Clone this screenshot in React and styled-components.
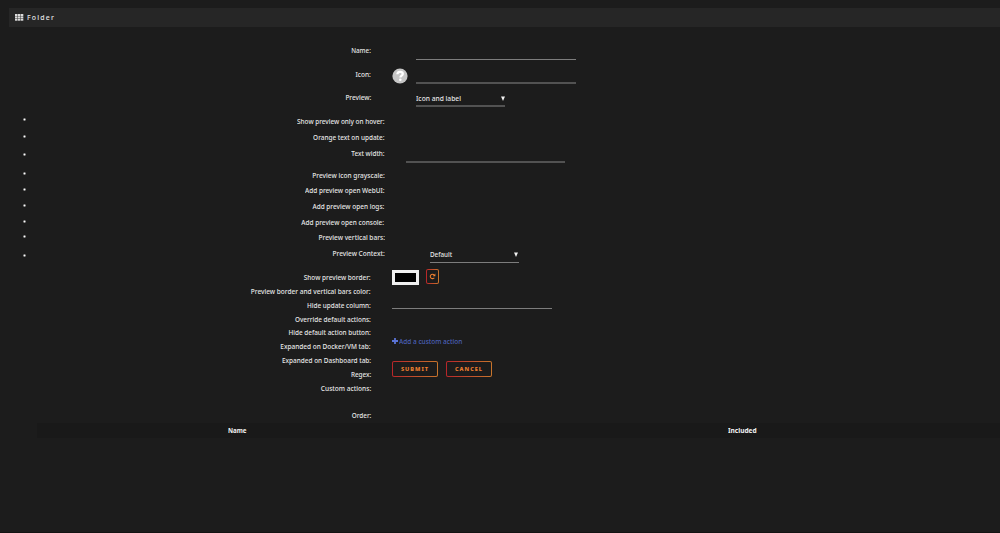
import React from "react"

import styled, { createGlobalStyle } from "styled-components"

const GlobalStyle = createGlobalStyle`
  * { box-sizing: border-box; }
  body {
    margin: 0;
    overflow: hidden;
    background: #1c1c1c;
    color: #e6e6e6;
    font-family: "Noto Sans", sans-serif;
    font-size: 7.6px;
    font-weight: 500;
    line-height: 13px;
  }
`

const Page = styled.div`
  height: 533px;
  overflow: hidden;
  border-bottom: 1px solid #131313;
`

const TitleBar = styled.header`
  display: flex;
  align-items: center;
  height: 19px;
  margin: 8px 0 0 9px;
  padding: 0 0 1px 5.5px;
  gap: 3.5px;
  background: #262626;
  letter-spacing: 1.3px;
`

const Form = styled.form`
  padding-top: 17px;
`

const Row = styled.div`
  display: flex;
  align-items: flex-start;
  height: ${props => props.$height}px;
`

// narrows the text to the proportions of a condensed face
const Condensed = styled.span`
  display: inline-block;
  white-space: nowrap;
  transform: scaleX(${props => props.$scale || 0.85});
  transform-origin: ${props => props.$origin || "left"} center;
`

const Label = styled.label`
  flex: none;
  width: 371px;
  height: 14px;
  padding-top: ${props => props.$drop || 0}px;
  text-align: right;
`

const ListLabel = styled(Label)`
  width: 361px;
`

const Marker = styled.span`
  flex: none;
  width: 3px;
  height: 3px;
  margin: ${props => props.$drop}px -2px 0 22.5px;
  background: radial-gradient(circle, #fff 15%, #1c1c1c 80%);
`

const Input = styled.input`
  display: block;
  width: 159.5px;
  height: ${props => props.$height || 16}px;
  margin-left: ${props => props.$left || 0}px;
  padding: 0;
  border: 0;
  border-bottom: ${props => props.$thick ? "2px solid #525252" : "1px solid #7d7d7d"};
  outline: none;
  background: transparent;
  color: inherit;
`

const Select = styled.div`
  display: flex;
  justify-content: space-between;
  width: 89px;
  height: ${props => props.$height}px;
  margin-left: ${props => props.$left}px;
  padding-top: 1px;
  border-bottom: ${props => props.$thick ? "2px solid #525252" : "1px solid #7d7d7d"};
`

const Caret = styled.svg`
  width: 4px;
  height: 5px;
  margin: 4px 0.5px 0 0;
  fill: #f2f2f2;
`

const Question = styled.svg`
  flex: none;
  width: 16px;
  height: 16px;
  margin: 1px 0 0 21px;
`

const Lower = styled.div`
  display: flex;
`

const Controls = styled.div`
  display: flex;
  flex-direction: column;
  align-items: flex-start;
  margin-left: 21px;
`

const ColorRow = styled.div`
  display: flex;
  gap: 7px;
  height: 16px;
  margin-top: -2px;
`

const Swatch = styled.div`
  width: 27px;
  height: 15px;
  margin-top: 1px;
  border: 3px solid #efefef;
  background: #000;
`

const OutlineButton = styled.button`
  display: flex;
  align-items: center;
  justify-content: center;
  width: ${props => props.$width}px;
  height: ${props => props.$height}px;
  padding: 0;
  border: 1px solid transparent;
  border-radius: 2px;
  background:
    linear-gradient(#1c1c1c, #1c1c1c) padding-box,
    linear-gradient(90deg, #b8262a, #c8752c) border-box;
  color: #f08030;
  font-family: inherit;
  font-size: 5.6px;
  font-weight: 800;
  letter-spacing: 1px;
`

const AddAction = styled.a`
  display: flex;
  align-items: center;
  gap: 1px;
  height: 14px;
  margin-top: 25px;
  color: #4b60b8;
`

const Buttons = styled.div`
  display: flex;
  gap: 8px;
  margin-top: 13px;
`

const OrderTable = styled.div`
  display: grid;
  grid-template-columns: 400px 1fr;
  margin-left: 37px;
  height: 15px;
  background: #191919;
  color: #f2f2f2;
  font-weight: 700;
  line-height: 14px;
`

const HeadCell = styled.div`
  padding-left: ${props => props.$inset}px;
`

const previewItems = [
  { text: "Show preview only on hover:", height: 17, drop: 4, scale: 0.845, nudge: 1 },
  { text: "Orange text on update:", height: 16, drop: 4, scale: 0.845 },
  { text: "Text width:", height: 21, drop: 6, scale: 0.84, input: true },
  { text: "Preview icon grayscale:", height: 16, drop: 4, scale: 0.865, nudge: 1 },
  { text: "Add preview open WebUI:", height: 16, drop: 4, scale: 0.85 },
  { text: "Add preview open logs:", height: 16, drop: 4, scale: 0.853 },
  { text: "Add preview open console:", height: 15, drop: 4, scale: 0.853 },
  { text: "Preview vertical bars:", height: 16, drop: 4, scale: 0.863 },
  { text: "Preview Context:", height: 24, drop: 7, scale: 0.858, select: true },
]

const lowerItems = [
  { text: "Show preview border:", height: 14, scale: 0.851 },
  { text: "Preview border and vertical bars color:", height: 14, scale: 0.858 },
  { text: "Hide update column:", height: 14, scale: 0.843 },
  { text: "Override default actions:", height: 13, scale: 0.845 },
  { text: "Hide default action button:", height: 14, scale: 0.842 },
  { text: "Expanded on Docker/VM tab:", height: 14, scale: 0.855 },
  { text: "Expanded on Dashboard tab:", height: 14, scale: 0.848 },
  { text: "Regex:", height: 14, scale: 0.84 },
  { text: "Custom actions:", height: 27, scale: 0.865 },
  { text: "Order:", height: 14, scale: 0.84 },
]

const GridIcon = () => (
  <svg width="9" height="7" viewBox="0 0 9 7" fill="#dcdcdc">
    {[0, 2.9, 5.8].map(x => [0, 2.35, 4.7].map(y => (
      <rect key={`${x}-${y}`} x={x} y={y} width="2.5" height="2" />
    )))}
  </svg>
)

const QuestionIcon = () => (
  <Question viewBox="0 0 16 16">
    <circle cx="8" cy="8" r="7.6" fill="#c6c6c6" />
    <path d="M5.4 6.2C5.5 4.6 6.6 3.9 8.1 3.9s2.7.8 2.7 2.1c0 1.6-2.4 1.6-2.4 3.4" fill="none" stroke="#fff" strokeWidth="2.3" />
    <circle cx="8.3" cy="11.8" r="1.3" fill="#fff" />
  </Question>
)

const PlusIcon = () => (
  <svg width="6" height="6" viewBox="0 0 6 6" fill="#5b74d6">
    <path d="M2.1 0h1.8v2.1H6v1.8H3.9V6H2.1V3.9H0V2.1h2.1z" />
  </svg>
)

const ResetIcon = () => (
  <svg width="7" height="7" viewBox="0 0 7 7">
    <path d="M5.2 2.1A2.2 2.2 0 1 0 5.3 4.7" fill="none" stroke="#f08030" strokeWidth="1.1" />
    <path d="M6.4.6v2.7H3.7z" fill="#f08030" />
  </svg>
)

const Dropdown = ({ value, scale, ...rest }) => (
  <Select {...rest}>
    <Condensed $scale={scale}>{value}</Condensed>
    <Caret viewBox="0 0 4 5"><path d="M0 .5h4L2 5z" /></Caret>
  </Select>
)

const App = () => {
  return (
    <>
      <GlobalStyle />
      <Page>
        <TitleBar>
          <GridIcon />
          <Condensed $scale={0.91}>Folder</Condensed>
        </TitleBar>

        <Form>
          <Row $height={23}>
            <Label><Condensed $origin="right" $scale={0.825}>Name:</Condensed></Label>
            <Input $left={45} />
          </Row>
          <Row $height={24}>
            <Label $drop={1}><Condensed $origin="right" $scale={0.86}>Icon:</Condensed></Label>
            <QuestionIcon />
            <Input $left={8} $height={17} $thick />
          </Row>
          <Row $height={23}>
            <Label><Condensed $origin="right" $scale={0.855}>Preview:</Condensed></Label>
            <Dropdown value="Icon and label" scale={0.88} $left={45} $height={16} $thick />
          </Row>

          {previewItems.map(item => (
            <Row key={item.text} $height={item.height}>
              <Marker $drop={item.drop} />
              <ListLabel $drop={item.nudge}>
                <Condensed $origin="right" $scale={item.scale}>{item.text}</Condensed>
              </ListLabel>
              {item.input && <Input $left={21} $height={16} $thick />}
              {item.select && <Dropdown value="Default" scale={0.83} $left={45} $height={16} />}
            </Row>
          ))}

          <Lower>
            <div>
              {lowerItems.map(item => (
                <Row key={item.text} $height={item.height}>
                  <Label>
                    <Condensed $origin="right" $scale={item.scale}>{item.text}</Condensed>
                  </Label>
                </Row>
              ))}
            </div>
            <Controls>
              <ColorRow>
                <Swatch />
                <OutlineButton type="button" $width={13} $height={15}>
                  <ResetIcon />
                </OutlineButton>
              </ColorRow>
              <Input $height={24} />
              <AddAction>
                <PlusIcon />
                <Condensed $scale={0.855}>Add a custom action</Condensed>
              </AddAction>
              <Buttons>
                <OutlineButton type="button" $width={46} $height={16}>SUBMIT</OutlineButton>
                <OutlineButton type="button" $width={46} $height={16}>CANCEL</OutlineButton>
              </Buttons>
            </Controls>
          </Lower>

          <OrderTable>
            <HeadCell $inset={191}><Condensed $scale={0.82}>Name</Condensed></HeadCell>
            <HeadCell $inset={291}><Condensed $scale={0.865}>Included</Condensed></HeadCell>
          </OrderTable>
        </Form>
      </Page>
    </>
  )
}

export default App
